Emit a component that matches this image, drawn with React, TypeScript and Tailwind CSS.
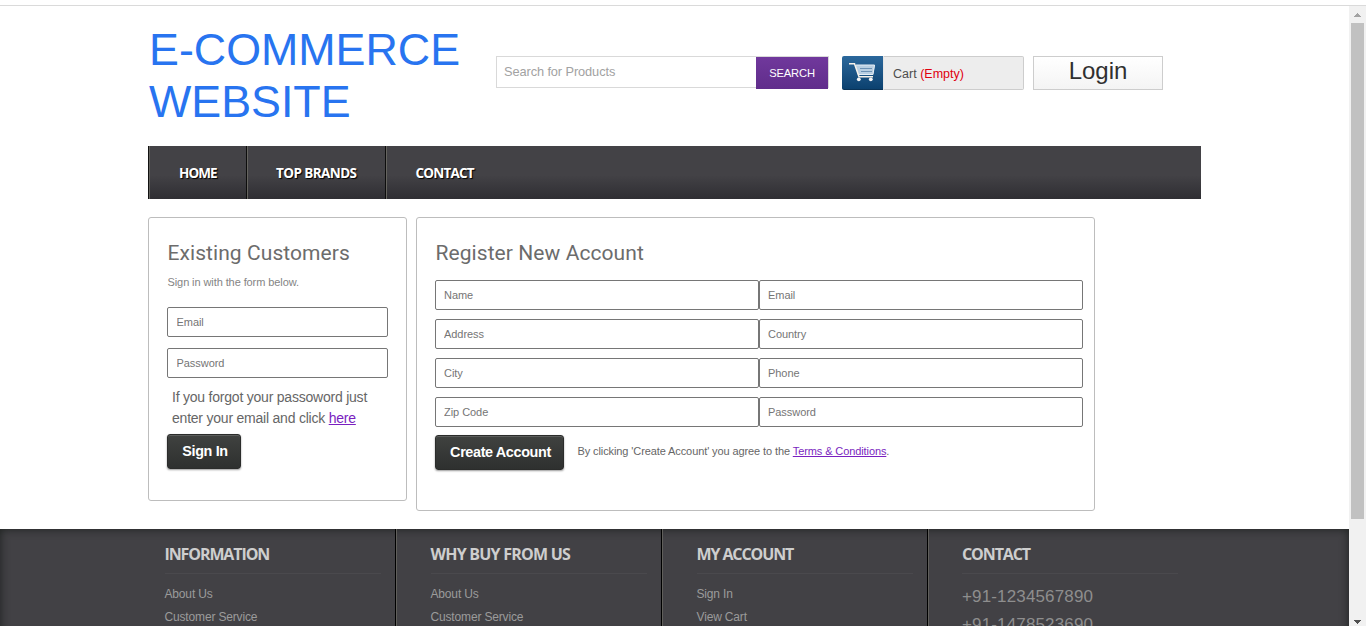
import React from "react";

const navItems = [
  { label: "HOME", box: "w-[98px] pl-[29px] border-r", text: "tracking-[-0.9px]" },
  { label: "TOP BRANDS", box: "w-[139px] pl-[28px] border-r", text: "tracking-[-0.58px]" },
  { label: "CONTACT", box: "w-[120px] pl-[28.5px]", text: "tracking-[-0.8px]" },
];

const fields = ["Name", "Email", "Address", "Country", "City", "Phone", "Zip Code", "Password"];

const footerColumns = [
  { title: "INFORMATION", tracking: "tracking-[-1.1px]", items: ["About Us", "Customer Service"] },
  { title: "WHY BUY FROM US", tracking: "tracking-[-0.77px]", items: ["About Us", "Customer Service"] },
  { title: "MY ACCOUNT", tracking: "tracking-[-1.1px]", items: ["Sign In", "View Cart"] },
];

function Field({ label, className }: { label: string; className: string }) {
  return (
    <input
      placeholder={label}
      className={`block h-[30px] rounded-[2px] border border-[#767676] bg-white text-[11px] tracking-[-0.05px] text-[#757575] outline-none placeholder:text-[#757575] ${className}`}
    />
  );
}

function DarkButton({ children, className }: { children: React.ReactNode; className: string }) {
  return (
    <button
      className={`h-[35px] shrink-0 whitespace-nowrap rounded-[3px] border border-[#2b2c2b] bg-linear-to-b from-[#404240] to-[#2e302f] pl-[2px] pt-px text-[14.4px] font-bold tracking-[-0.36px] text-white shadow-[0_1px_2px_rgba(0,0,0,0.4),inset_0_1px_0_rgba(255,255,255,0.15)] ${className}`}
    >
      {children}
    </button>
  );
}

function PanelTitle({ children }: { children: React.ReactNode }) {
  return (
    <h2 className="h-[30px] whitespace-nowrap pl-[0.5px] font-[Roboto,sans-serif] text-[21px] leading-[30px] tracking-[0.07px] text-[#6c6c6c]">
      {children}
    </h2>
  );
}

function FooterTitle({ children, tracking }: { children: React.ReactNode; tracking: string }) {
  return (
    <h3
      className={`h-8 w-[216px] whitespace-nowrap border-b border-[#4a494d] font-['Open_Sans',sans-serif] text-[16px] font-bold leading-6 text-[#cecece] ${tracking}`}
    >
      {children}
    </h3>
  );
}

function CartIcon() {
  return (
    <svg width="41" height="34" viewBox="0 0 41 34" fill="none">
      <path d="M13 9 H33 L31 19 H16 Z" fill="#b9cfe2" />
      <path d="M18 12.5H30M19 15.5H30" stroke="#6d92b5" strokeWidth="1" />
      <path d="M7 7.8H12.5L17 20.8H31" stroke="#f7f2ea" strokeWidth="1.5" />
      <path d="M14 9H32.5L31 18.5H17" stroke="#e6eef5" strokeWidth="1" />
      <circle cx="16.8" cy="23.3" r="1.9" fill="#f4f4f4" />
      <circle cx="28.8" cy="23.3" r="1.9" fill="#f4f4f4" />
    </svg>
  );
}

export default function App() {
  return (
    <div className="flex h-[626px] flex-col overflow-hidden bg-white pt-[5px] font-['Liberation_Sans',sans-serif]">
      <div className="flex min-h-0 flex-1 border-t border-[#dadada]">
        <main className="flex min-w-0 flex-1 flex-col overflow-hidden">
          <header className="flex h-[140px] shrink-0 items-start pl-[148px]">
            <h1 className="mt-[17px] w-[348px] pl-px text-[44.8px] leading-[52px] text-[#2874f0]">
              E-COMMERCE
              <br />
              WEBSITE
            </h1>
            <form className="mt-[50px] flex h-8 w-[333px] border border-[#d9d9d9]">
              <input
                placeholder="Search for Products"
                className="w-[259px] pl-[7px] text-[12.8px] tracking-[-0.1px] outline-none placeholder:text-[#a2a2a2]"
              />
              <button
                type="button"
                className="h-8 w-[72px] bg-linear-to-b from-[#70389c] to-[#602d8b] text-[11.2px] tracking-[-0.15px] text-white"
              >
                SEARCH
              </button>
            </form>
            <div className="ml-[13px] mt-[50px] flex h-[34px] w-[182px]">
              <div className="w-[41px] rounded-l-[2px] border-b border-[#0a3357] bg-linear-to-b from-[#2b689c] to-[#0b416f]">
                <CartIcon />
              </div>
              <div className="flex flex-1 items-center rounded-r-[2px] border border-[#cdcdcd] border-l-[#e6e6e6] bg-[#ededed] pl-[9px] pt-[2px] text-[12.5px] text-[#4e4e4e]">
                Cart<span className="ml-[3.5px] text-[#e0000f]">(Empty)</span>
              </div>
            </div>
            <a className="ml-[9px] mt-[50px] block h-[34px] w-[130px] border border-[#cdcdcd] bg-linear-to-b from-white to-[#f4f4f4] text-center text-[24px] leading-[28px] text-[#303030]">
              Login
            </a>
          </header>

          <nav className="ml-[148px] flex h-[53px] w-[1053px] shrink-0 border-l border-[#111] bg-linear-to-b from-[#434246] from-55% to-[#2f2e33]">
            {navItems.map((item) => (
              <a
                key={item.label}
                className={`flex items-center whitespace-nowrap border-l-[#65645f] border-r-[#0d0d0d] border-l pt-[2px] font-['Open_Sans',sans-serif] text-[13.5px] font-bold text-white [text-shadow:1px_1px_1px_#000] ${item.box}`}
              >
                <span className={item.text}>{item.label}</span>
              </a>
            ))}
          </nav>

          <div className="flex h-[330px] shrink-0 items-start gap-[9px] pl-[148px] pt-[18px]">
            <section className="h-[284px] w-[259px] rounded-[3px] border border-[#bdbdbd] pl-[18px] pt-[20px]">
              <PanelTitle>Existing Customers</PanelTitle>
              <p className="mt-[5px] h-[18px] pl-[0.5px] text-[11px] leading-[18px] tracking-[-0.09px] text-[#848484]">
                Sign in with the form below.
              </p>
              <Field label="Email" className="mt-4 w-[221px] pl-[8.5px]" />
              <Field label="Password" className="mt-[11px] w-[221px] pl-[8.5px]" />
              <p className="mt-[9px] whitespace-nowrap pl-[5px] text-[14px] leading-[21px] tracking-[-0.22px] text-[#666]">
                If you forgot your passoword just
                <br />
                enter your email and click <a className="text-[#7a1fc0] underline">here</a>
              </p>
              <DarkButton className="mt-[5px] w-[74px]">Sign In</DarkButton>
            </section>

            <section className="h-[294px] w-[679px] rounded-[3px] border border-[#bdbdbd] pl-[18px] pt-[20px]">
              <PanelTitle>Register New Account</PanelTitle>
              <div className="mt-[12px] grid w-[648px] grid-cols-2 gap-y-[9px]">
                {fields.map((label) => (
                  <Field key={label} label={label} className="w-full pl-[8px]" />
                ))}
              </div>
              <div className="mt-2 flex">
                <DarkButton className="w-[129px]">Create Account</DarkButton>
                <p className="ml-[13px] pl-[0.5px] pt-[7px] text-[11px] leading-[18px] tracking-[-0.1px] text-[#666]">
                  By clicking 'Create Account' you agree to the{" "}
                  <a className="text-[#7a1fc0] underline">Terms &amp; Conditions</a>.
                </p>
              </div>
            </section>
          </div>

          <footer className="flex h-[106px] shrink-0 overflow-hidden bg-[#424145] pl-[130px] shadow-[inset_0_0_10px_#1d211f]">
            {footerColumns.map((column) => (
              <div
                key={column.title}
                className="w-[266px] shrink-0 border-r border-r-black pl-[34.5px] pt-[13px] text-[12px] text-[#9b9b9b] shadow-[1px_0_0_#605f5b]"
              >
                <FooterTitle tracking={column.tracking}>{column.title}</FooterTitle>
                <ul className="pt-[9px] leading-[23px] tracking-[-0.16px]">
                  {column.items.map((item) => (
                    <li key={item}>{item}</li>
                  ))}
                </ul>
              </div>
            ))}
            <div className="pl-[34px] pt-[13px]">
              <FooterTitle tracking="tracking-[-1.1px]">CONTACT</FooterTitle>
              <p className="pt-[9px] text-[17px] leading-[28px] tracking-[0.15px] text-[#8e8e8e]">
                +91-1234567890
                <br />
                +91-1478523690
              </p>
            </div>
          </footer>
        </main>

        <aside className="flex w-[17px] shrink-0 flex-col items-center bg-[#f1f1f1]">
          <svg width="17" height="17" viewBox="0 0 17 17" shapeRendering="crispEdges">
            <path d="M5 11L8.5 7L12 11Z" fill="#a3a3a3" />
          </svg>
          <div className="mr-px h-[496px] w-[13px] bg-[#c1c1c1]" />
          <svg className="mt-auto" width="17" height="9" viewBox="0 0 17 9" shapeRendering="crispEdges">
            <path d="M5 3H12L8.5 7Z" fill="#505050" />
          </svg>
        </aside>
      </div>
    </div>
  );
}
